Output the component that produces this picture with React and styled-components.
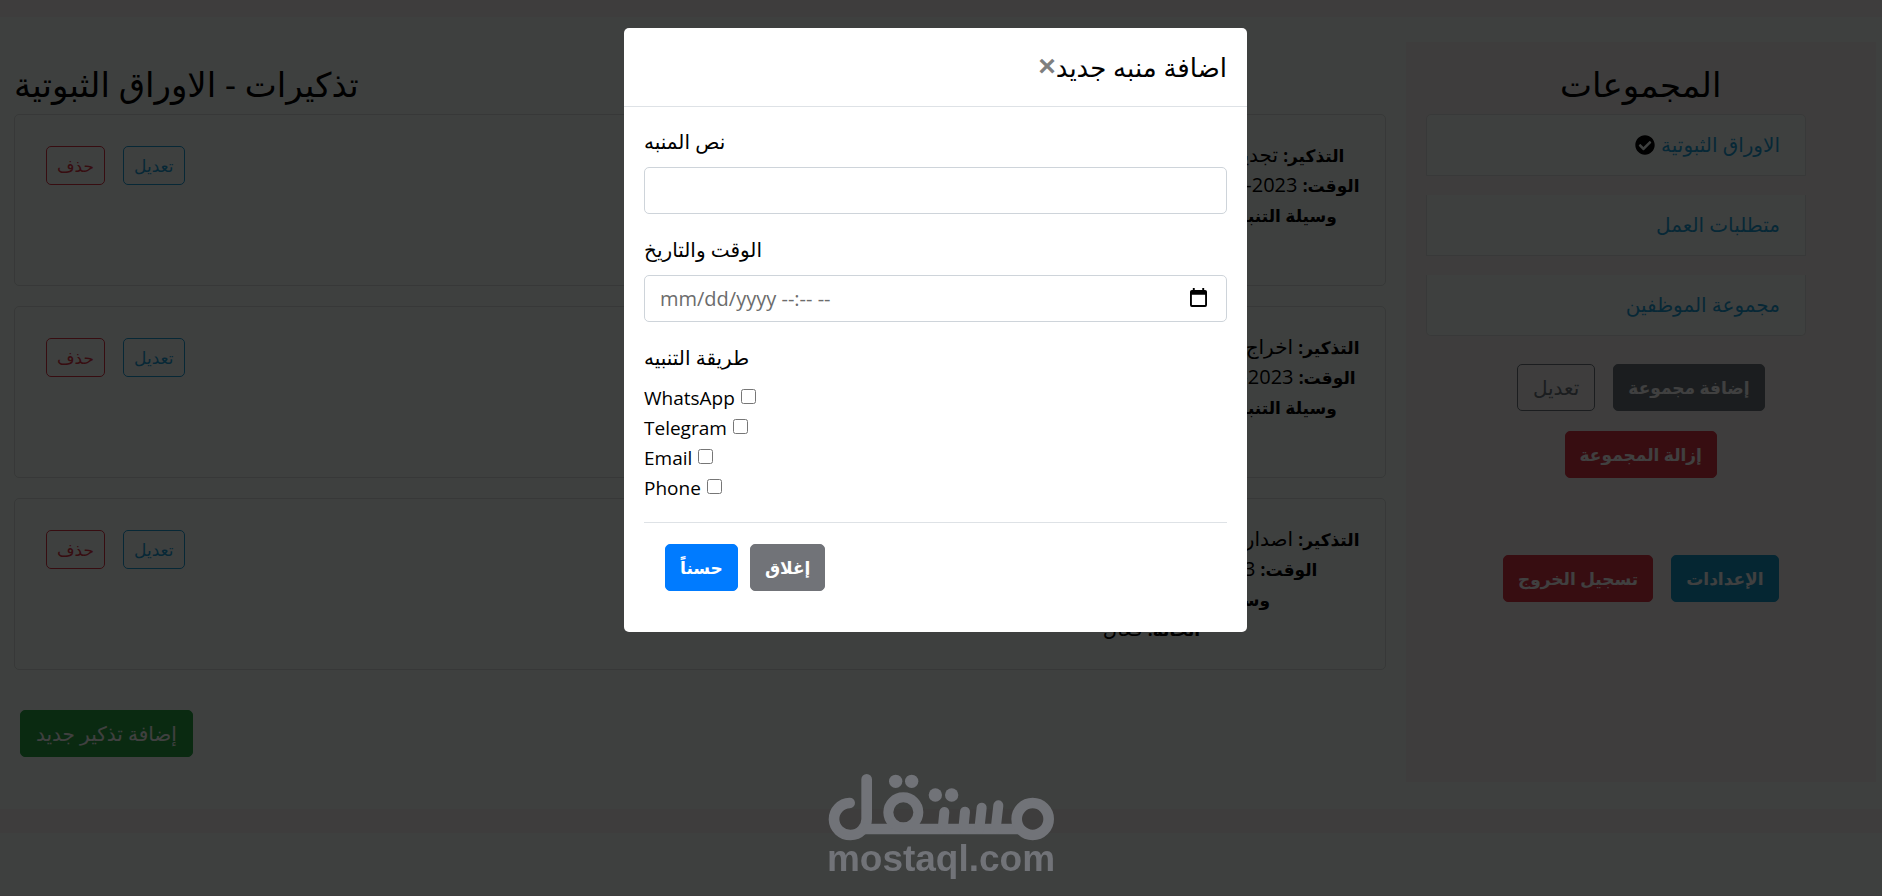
import React, { useState } from 'react';
import styled, { createGlobalStyle } from 'styled-components';
import { FaCheckCircle } from 'react-icons/fa';

const GlobalStyle = createGlobalStyle`
  * {
    box-sizing: border-box;
  }

  body {
    margin: 0;
    background: #f5f1f1;
    color: #000;
    font-family: 'Open Sans', 'Noto Sans', 'DejaVu Sans', sans-serif;
    font-size: 20px;
    line-height: 30px;
  }

  h2, h5, p, ul {
    margin: 0;
    padding: 0;
  }
`;

const Page = styled.div`
  padding-top: 17px;
`;

const Content = styled.main`
  display: flex;
  align-items: flex-start;
  background: #f8fffc;
  padding: 25px 0 27px;
`;

const Reminders = styled.section`
  flex: 1;
  padding-top: 18px;
  margin: 0 20px 0 14px;
`;

const Heading = styled.h2`
  font-size: 34px;
  font-weight: 500;
  line-height: 48px;
  margin-bottom: 6px;
  text-align: ${props => props.$align || 'left'};
`;

const ReminderCard = styled.article`
  display: flex;
  justify-content: space-between;
  padding: 25px;
  margin-bottom: 20px;
  border: 1px solid #d9dfdd;
  border-radius: 5px;
`;

const CardActions = styled.div`
  display: flex;
  align-items: flex-start;
  gap: 18px;
  padding: 6px;
`;

const CardText = styled.div`
  width: 416px;
  text-align: center;
  white-space: nowrap;

  b {
    font-size: 17px;
    line-height: 20px;
  }
`;

const Button = styled.button`
  height: ${props => (props.$small ? '39px' : '47px')};
  padding: ${props => (props.$small ? '0 10px' : props.$bold ? '0 14px' : '0 15px')};
  border: 1px solid ${props => props.$color};
  border-radius: 5px;
  background: ${props => (props.$outline ? 'transparent' : props.$color)};
  color: ${props => (props.$outline ? props.$color : '#fff')};
  font-family: inherit;
  font-size: ${props => (props.$small || props.$bold ? '17px' : '20px')};
  font-weight: ${props => (props.$bold ? 600 : 400)};
  cursor: pointer;
`;

const AddRow = styled.div`
  padding: 20px 6px 25px;
`;

const Sidebar = styled.aside`
  width: 25%;
  min-height: 740px;
  margin-right: 6px;
  padding: 18px 20px;
  background: #f5f1f1;
`;

const GroupList = styled.ul`
  list-style: none;
  display: flex;
  flex-direction: column;
  gap: 19px;
  margin-right: 50px;
`;

const GroupItem = styled.li`
  padding: 15px 25px;
  border: 1px solid #dfe3e1;
  border-top-width: 0;
  background: #f8fffc;

  &:first-child {
    border-top-width: 1px;
    border-radius: 5px 5px 0 0;
  }

  &:last-child {
    border-radius: 0 0 5px 5px;
  }
`;

const GroupLink = styled.a`
  display: flex;
  align-items: center;
  gap: 6px;
  color: #1c9fd8;
  text-decoration: none;

  svg {
    color: #000;
  }
`;

const SidebarButtons = styled.div`
  display: flex;
  flex-wrap: wrap;
  justify-content: center;
  gap: 20px 18px;
  padding: 28px 60px 0;
`;

const AccountButtons = styled(SidebarButtons)`
  padding-top: 77px;
`;

const Footer = styled.footer`
  height: 62px;
  margin-top: 24px;
  background: #f8fffc;
`;

const Backdrop = styled.div`
  position: fixed;
  inset: 0;
  display: flex;
  justify-content: center;
  align-items: flex-start;
  padding: 28px 11px 28px 0;
  background: rgba(0, 0, 0, 0.75);
`;

const Modal = styled.div`
  width: 623px;
  background: #fff;
  border-radius: 5px;
`;

const ModalHeader = styled.div`
  display: flex;
  align-items: flex-start;
  padding: 20px;
  border-bottom: 1px solid #dee2e6;
`;

const ModalTitle = styled.h5`
  font-size: 26px;
  font-weight: 500;
  line-height: 38px;
`;

const CloseButton = styled.button`
  padding: 0;
  border: none;
  background: none;
  color: #7f7f7f;
  font-family: 'Liberation Sans', sans-serif;
  font-size: 30px;
  font-weight: 700;
  line-height: 36px;
  cursor: pointer;
`;

const ModalBody = styled.form`
  padding: 20px;
`;

const Field = styled.div`
  margin-bottom: 21px;
`;

const Label = styled.label`
  display: block;
  margin-bottom: 10px;
`;

const InputBox = styled.div`
  display: flex;
  align-items: center;
  height: 47px;
  padding: 0 15px;
  border: 1px solid #ced4da;
  border-radius: 5px;
  background: #fff;
`;

const Input = styled.input`
  flex: 1;
  height: 30px;
  padding: 0;
  border: none;
  outline: none;
  background: none;
  color: #495057;
  font-family: inherit;
  font-size: 20px;

  &::placeholder {
    color: #6c6c6c;
  }
`;

const PickerButton = styled.button`
  display: flex;
  padding: 0 4px 3px;
  border: none;
  background: none;
  color: #000;
  cursor: pointer;
`;

const Methods = styled.fieldset`
  margin: 0 0 19px;
  padding: 0;
  border: none;

  legend {
    padding: 0;
    margin-bottom: 10px;
  }
`;

const Method = styled.label`
  display: flex;
  align-items: center;
  gap: 6px;
  height: 30px;
  font-size: 19px;

  input {
    width: 15px;
    height: 15px;
    margin: 0 0 3px;
  }
`;

const ModalFooter = styled.div`
  display: flex;
  gap: 12px;
  padding: 21px;
  border-top: 1px solid #dee2e6;
`;

const Watermark = styled.div`
  position: fixed;
  left: 0;
  right: 0;
  bottom: 19px;
  display: flex;
  flex-direction: column;
  align-items: center;
  color: #717378;
  font-family: 'Liberation Sans', sans-serif;
  font-size: 37px;
  font-weight: 700;
  line-height: 36px;
  pointer-events: none;
`;

const colors = {
  blue: '#1c9fd8',
  info: '#1799c8',
  red: '#dc3545',
  green: '#28a745',
  gray: '#6c757d',
};

const groups = ['الاوراق الثبوتية', 'متطلبات العمل', 'مجموعة الموظفين'];

const reminders = [
  { id: 1, text: 'تجديد جواز السفر الخاص بمدير الشركة', time: '2023-05-20 الساعة 10:30:00 صباحاً بتوقيت', method: 'WhatsApp, Telegram, Email' },
  { id: 2, text: 'اخراج بدل فاقد للبطاقة الشخصية للموظفين', time: '2023-06-14 الساعة 09:00:00 توقيت مكة', method: 'WhatsApp, Telegram, Email' },
  { id: 3, text: 'اصدار رخصة قيادة جديدة للموظف بالشركة', time: '2023-07-01 الساعة 12:00:00 م', method: 'Email, Phone' },
];

const methods = ['WhatsApp', 'Telegram', 'Email', 'Phone'];

const Logo = () => (
  <svg width="227" height="68" viewBox="143 98 681 204" fill="none" stroke="currentColor" strokeWidth="32" strokeLinecap="round" aria-hidden="true">
    <path d="M208 188A49 48 0 1 0 259 236V117" />
    <path d="M250 266H718" strokeLinecap="butt" />
    <circle cx="369" cy="216" r="45" strokeWidth="30" />
    <circle cx="757" cy="236" r="48" />
    <path d="M492 215L487 266M554 214L549 266M604 202L597 266M654 195L646 266" strokeWidth="30" />
    <g fill="currentColor" stroke="none">
      <circle cx="346" cy="123" r="20" />
      <circle cx="394" cy="123" r="20" />
      <circle cx="465" cy="164" r="20" />
      <circle cx="514" cy="164" r="20" />
    </g>
  </svg>
);

const CalendarIcon = () => (
  <svg width="17" height="19" viewBox="0 0 18 20" fill="currentColor" aria-hidden="true">
    <path fillRule="evenodd" d="M3 0H5V2H13V0H15V2H16A2 2 0 0 1 18 4V18A2 2 0 0 1 16 20H2A2 2 0 0 1 0 18V4A2 2 0 0 1 2 2H3ZM2 7V18H16V7Z" />
  </svg>
);

const App = () => {
  const [isOpen, setIsOpen] = useState(true);
  const [activeGroup, setActiveGroup] = useState(0);
  const [text, setText] = useState('');
  const [time, setTime] = useState('');

  const handleSubmit = (e) => {
    e.preventDefault();
    setIsOpen(false);
  };

  return (
    <>
      <GlobalStyle />
      <Page>
        <Content>
          <Reminders>
            <Heading>تذكيرات - {groups[activeGroup]}</Heading>
            {reminders.map(item => (
              <ReminderCard key={item.id}>
                <CardActions>
                  <Button $small $outline $color={colors.red}>حذف</Button>
                  <Button $small $outline $color={colors.blue}>تعديل</Button>
                </CardActions>
                <CardText dir="rtl">
                  <p><b>التذكير:</b> {item.text}</p>
                  <p><b>الوقت:</b> {item.time}</p>
                  <p><b>وسيلة التنبيه:</b> {item.method}</p>
                  <p><b>الحالة:</b> فعال</p>
                </CardText>
              </ReminderCard>
            ))}
            <AddRow>
              <Button $color={colors.green} onClick={() => setIsOpen(true)}>إضافة تذكير جديد</Button>
            </AddRow>
          </Reminders>
          <Sidebar dir="rtl">
            <Heading $align="center">المجموعات</Heading>
            <GroupList>
              {groups.map((group, index) => (
                <GroupItem key={group}>
                  <GroupLink href="#" onClick={() => setActiveGroup(index)}>
                    {group}
                    {index === activeGroup && <FaCheckCircle size={20} />}
                  </GroupLink>
                </GroupItem>
              ))}
            </GroupList>
            <SidebarButtons>
              <Button $bold $color={colors.gray}>إضافة مجموعة</Button>
              <Button $outline $color={colors.gray}>تعديل</Button>
              <Button $bold $color={colors.red}>إزالة المجموعة</Button>
            </SidebarButtons>
            <AccountButtons>
              <Button $bold $color={colors.info}>الإعدادات</Button>
              <Button $bold $color={colors.red}>تسجيل الخروج</Button>
            </AccountButtons>
          </Sidebar>
        </Content>
        <Footer />
      </Page>
      {isOpen && (
        <Backdrop>
          <Modal role="dialog" aria-labelledby="modal-title">
            <ModalHeader dir="rtl">
              <ModalTitle id="modal-title">اضافة منبه جديد</ModalTitle>
              <CloseButton aria-label="إغلاق" onClick={() => setIsOpen(false)}>×</CloseButton>
            </ModalHeader>
            <ModalBody onSubmit={handleSubmit}>
              <Field>
                <Label htmlFor="text">نص المنبه</Label>
                <InputBox>
                  <Input id="text" type="text" value={text} onChange={e => setText(e.target.value)} />
                </InputBox>
              </Field>
              <Field>
                <Label htmlFor="time">الوقت والتاريخ</Label>
                <InputBox>
                  <Input
                    id="time"
                    type="text"
                    placeholder="mm/dd/yyyy --:-- --"
                    value={time}
                    onChange={e => setTime(e.target.value)}
                  />
                  <PickerButton type="button" aria-label="التاريخ">
                    <CalendarIcon />
                  </PickerButton>
                </InputBox>
              </Field>
              <Methods>
                <legend>طريقة التنبيه</legend>
                {methods.map(method => (
                  <Method key={method}>
                    {method}
                    <input type="checkbox" name={method} />
                  </Method>
                ))}
              </Methods>
              <ModalFooter>
                <Button $bold $color="#007bff" type="submit">حسناً</Button>
                <Button $bold $color="#717378" type="button" onClick={() => setIsOpen(false)}>إغلاق</Button>
              </ModalFooter>
            </ModalBody>
          </Modal>
        </Backdrop>
      )}
      <Watermark>
        <Logo />
        mostaql.com
      </Watermark>
    </>
  );
};

export default App;
